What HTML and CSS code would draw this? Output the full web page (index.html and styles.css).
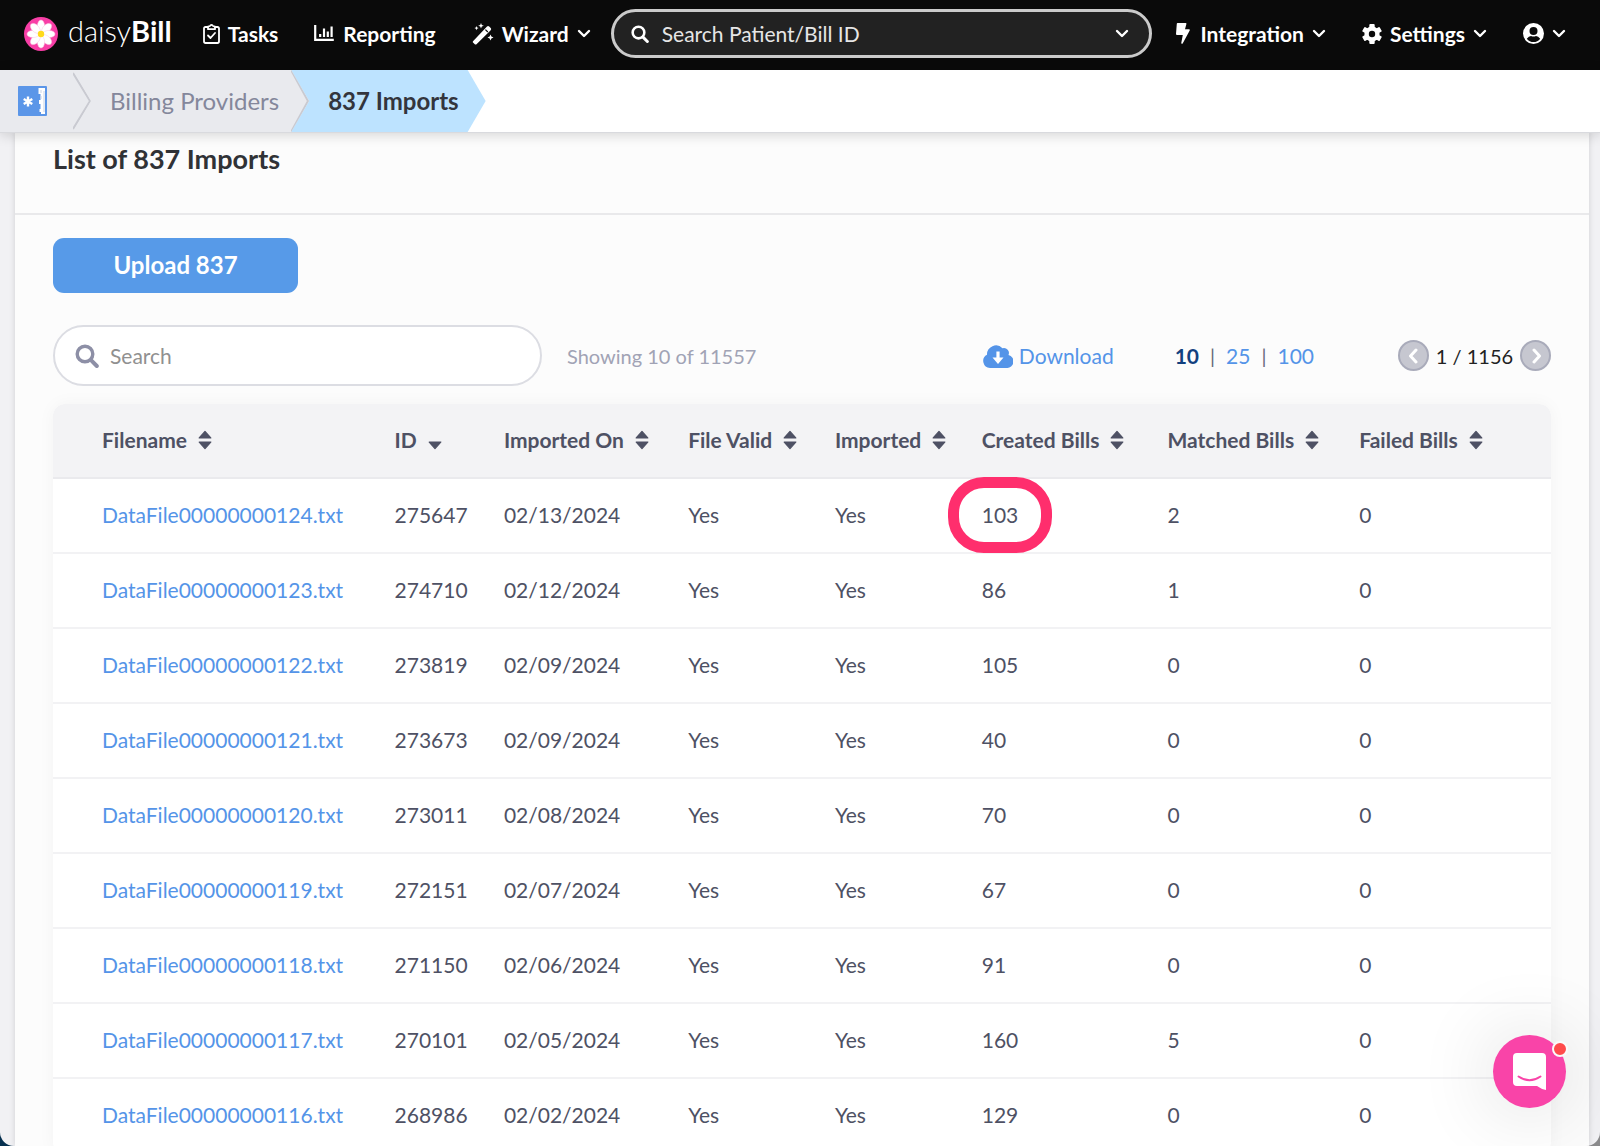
FILE: index.html
```html
<!DOCTYPE html>
<html lang="en">
<head>
    <meta charset="UTF-8">
    <meta name="viewport" content="width=device-width, initial-scale=1.0">
    <title>837 Imports - daisyBill</title>
    <link rel="stylesheet" href="styles.css">
</head>
<body>
    <!-- shared icons -->
    <svg class="sprite" aria-hidden="true">
        <symbol id="chevron" viewBox="0 0 14 10"><path d="M2 2l5 5 5-5" fill="none" stroke="currentColor" stroke-width="2.4" stroke-linecap="round" stroke-linejoin="round"/></symbol>
        <symbol id="magnifier" viewBox="0 0 24 24"><circle cx="10" cy="10" r="7.8" fill="none" stroke="currentColor" stroke-width="3.4"/><path d="M16 16.2l5.8 5.8" stroke="currentColor" stroke-width="4" stroke-linecap="round"/></symbol>
        <symbol id="sort" viewBox="0 0 14 20"><path d="M7 1.4l5.8 6.6H1.2zM7 18.6l5.8-6.6H1.2z" fill="currentColor" stroke="currentColor" stroke-width="1.2" stroke-linejoin="round"/></symbol>
        <symbol id="sort-down" viewBox="0 0 14 20"><path d="M7 18.6l5.8-6.6H1.2z" fill="currentColor" stroke="currentColor" stroke-width="1.2" stroke-linejoin="round"/></symbol>
    </svg>

    <div class="window">
        <header class="topbar">
            <a class="logo" href="#">
                <svg width="34" height="34" viewBox="0 0 34 34" aria-hidden="true">
                    <circle cx="17" cy="17" r="17" fill="#f83ea6"/>
                    <g fill="#fff" stroke="#f9c6e0" stroke-width=".5">
                        <ellipse cx="17" cy="9" rx="3.6" ry="6"/>
                        <ellipse cx="17" cy="9" rx="3.6" ry="6" transform="rotate(45 17 17)"/>
                        <ellipse cx="17" cy="9" rx="3.6" ry="6" transform="rotate(90 17 17)"/>
                        <ellipse cx="17" cy="9" rx="3.6" ry="6" transform="rotate(135 17 17)"/>
                        <ellipse cx="17" cy="9" rx="3.6" ry="6" transform="rotate(180 17 17)"/>
                        <ellipse cx="17" cy="9" rx="3.6" ry="6" transform="rotate(225 17 17)"/>
                        <ellipse cx="17" cy="9" rx="3.6" ry="6" transform="rotate(270 17 17)"/>
                        <ellipse cx="17" cy="9" rx="3.6" ry="6" transform="rotate(315 17 17)"/>
                    </g>
                    <circle cx="17" cy="17" r="3.2" fill="#ffd91a"/>
                </svg>
                <span>daisy<b>Bill</b></span>
            </a>

            <nav class="menu">
                <a href="#">
                    <svg width="17" height="21" viewBox="0 0 17 21" aria-hidden="true"><g fill="none" stroke="currentColor" stroke-width="1.8" stroke-linejoin="round" stroke-linecap="round"><path d="M5 4H2.500Q1 4 1 5.500v12.800Q1 20 2.500 20h12q1.500 0 1.500-1.700V5.500Q16 4 14.500 4H12"/><path d="M5 6.200V3.700l2-.7a1.600 1.600 0 0 1 3 0l2 .7v2.500z"/><path d="M5 12.500l2.500 2.500 4.500-5"/></g></svg>
                    Tasks
                </a>
                <a href="#">
                    <svg width="21" height="19" viewBox="0 0 21 19" aria-hidden="true"><path d="M1.200 1v14.800h18.600M6.200 13v-3M10 13V4.500M13.800 13V7.500M17.600 13V2.500" fill="none" stroke="currentColor" stroke-width="2.2"/></svg>
                    Reporting
                </a>
                <button type="button">
                    <svg width="22" height="22" viewBox="0 0 22 22" aria-hidden="true"><path d="M1 18.200L15 3.600q1-1 2.200-.1l1.500 1.500q1 1 0 2.200L4.500 21.200q-.8.8-1.700 0l-1.800-1.700q-.6-.6 0-1.300z" fill="currentColor"/><path d="M13.400 6.600l2.400 2.400" stroke="#0a0a0a" stroke-width="1.2"/><path d="M9 0l.8 2 2 .8-2 .8L9 5.600l-.8-2-2-.8 2-.8zM4.500 3l.6 1.500 1.500.6-1.500.6-.6 1.500-.6-1.500-1.500-.6 1.500-.6zM18.500 11.500l.9 2.100 2.100.9-2.100.9-.9 2.100-.9-2.100-2.100-.9 2.100-.9z" fill="currentColor"/></svg>
                    Wizard
                    <svg class="chevron" aria-hidden="true"><use href="#chevron"/></svg>
                </button>
            </nav>

            <form class="patient-search" role="search">
                <svg width="18" height="18" aria-hidden="true"><use href="#magnifier"/></svg>
                <input type="text" placeholder="Search Patient/Bill ID" aria-label="Search Patient/Bill ID">
                <button type="button" aria-label="Search options"><svg class="chevron" aria-hidden="true"><use href="#chevron"/></svg></button>
            </form>

            <nav class="menu">
                <button type="button">
                    <svg class="bolt" width="14" height="21" viewBox="0 0 14 21" aria-hidden="true"><path d="M1.500 0h8.200q.9 0 .7.9L9 6.200h4q1.200 0 .7 1.200L6.800 20.300q-.5.8-1.200.4-.5-.3-.3-1L6.800 12H1Q0 12 0 11L.8.700Q.9 0 1.500 0z" fill="currentColor"/></svg>
                    Integration
                    <svg class="chevron" aria-hidden="true"><use href="#chevron"/></svg>
                </button>
                <button type="button">
                    <svg width="20" height="20" viewBox="0 0 20 20" aria-hidden="true"><g fill="currentColor"><rect x="7.300" y="0" width="5.400" height="20" rx="1"/><rect x="7.300" y="0" width="5.400" height="20" rx="1" transform="rotate(60 10 10)"/><rect x="7.300" y="0" width="5.400" height="20" rx="1" transform="rotate(120 10 10)"/><circle cx="10" cy="10" r="7.6"/></g><circle cx="10" cy="10" r="3.2" fill="#0a0a0a"/></svg>
                    Settings
                    <svg class="chevron" aria-hidden="true"><use href="#chevron"/></svg>
                </button>
                <button type="button" aria-label="Account">
                    <svg width="21" height="21" viewBox="0 0 21 21" aria-hidden="true"><circle cx="10.500" cy="10.500" r="10.500" fill="currentColor"/><circle cx="10.500" cy="8" r="4" fill="#0a0a0a"/><path d="M3.800 15.800Q5.800 13 8 13q2.500 1 5 0 2.200 0 4.200 2.800a8.500 8.500 0 0 1-13.400 0z" fill="#0a0a0a"/></svg>
                    <svg class="chevron" aria-hidden="true"><use href="#chevron"/></svg>
                </button>
            </nav>
        </header>

        <nav class="breadcrumbs" aria-label="Breadcrumb">
            <ol>
                <li class="home">
                    <a href="#" aria-label="Home">
                        <svg width="30" height="30" viewBox="0 0 30 30" aria-hidden="true"><rect width="29" height="30" rx="1" fill="#5b96e8"/><path d="M20.500 2h6.500v26h-4v-2h-1.500v-3h1v-5h-1.500v-4h1.500V8h-2z" fill="#fff"/><path d="M26 5v21M23 4v3M23 10v3" stroke="#c9d3e3" stroke-width="1"/><path d="M10 10.500v10M5.700 13l8.600 5M14.300 13l-8.600 5" stroke="#fff" stroke-width="2.4"/></svg>
                    </a>
                    <svg class="arrow" viewBox="0 0 18 62" preserveAspectRatio="none" aria-hidden="true"><path d="M0 3l17 28L0 59"/></svg>
                </li>
                <li>
                    <a href="#">Billing Providers</a>
                    <svg class="arrow" viewBox="0 0 18 62" preserveAspectRatio="none" aria-hidden="true"><path d="M0 0l17 31L0 62"/></svg>
                </li>
                <li class="current" aria-current="page">837 Imports</li>
            </ol>
        </nav>

        <main class="panel">
            <h1>List of 837 Imports</h1>

            <div class="content">
                <button class="upload" type="button">Upload 837</button>

                <div class="toolbar">
                    <div class="search">
                        <svg width="24" height="24" aria-hidden="true"><use href="#magnifier"/></svg>
                        <input type="text" placeholder="Search" aria-label="Search">
                    </div>
                    <span class="showing">Showing 10 of 11557</span>
                    <a class="download" href="#">
                        <svg width="30" height="24" viewBox="0 0 30 24" aria-hidden="true"><path d="M7 24a7 7 0 0 1-3-13.200A9 9 0 0 1 19.500 4.200 5 5 0 0 1 25.500 11 6.600 6.600 0 0 1 23.500 24z" fill="currentColor"/><path d="M15 7.500v8" stroke="#fff" stroke-width="3.2"/><path d="M9.500 13.500h11L15 20z" fill="#fff"/></svg>
                        Download
                    </a>
                    <div class="sizes">
                        <b>10</b><i>|</i><a href="#">25</a><i>|</i><a href="#">100</a>
                    </div>
                    <div class="pager">
                        <button type="button" aria-label="Previous page"><svg width="12" height="16" viewBox="0 0 12 16" aria-hidden="true"><path d="M8 2L2.500 8 8 14"/></svg></button>
                        <span>1 / 1156</span>
                        <button type="button" aria-label="Next page"><svg width="12" height="16" viewBox="0 0 12 16" aria-hidden="true"><path d="M4 2l5.500 6L4 14"/></svg></button>
                    </div>
                </div>

                <table class="imports">
                    <colgroup>
                        <col class="col-file"><col class="col-id"><col class="col-date"><col class="col-flag"><col class="col-flag"><col class="col-created"><col class="col-count"><col class="col-count">
                    </colgroup>
                    <thead>
                        <tr>
                            <th><button type="button">Filename <svg aria-hidden="true"><use href="#sort"/></svg></button></th>
                            <th aria-sort="descending"><button type="button">ID <svg aria-hidden="true"><use href="#sort-down"/></svg></button></th>
                            <th><button type="button">Imported On <svg aria-hidden="true"><use href="#sort"/></svg></button></th>
                            <th><button type="button">File Valid <svg aria-hidden="true"><use href="#sort"/></svg></button></th>
                            <th><button type="button">Imported <svg aria-hidden="true"><use href="#sort"/></svg></button></th>
                            <th><button type="button">Created Bills <svg aria-hidden="true"><use href="#sort"/></svg></button></th>
                            <th><button type="button">Matched Bills <svg aria-hidden="true"><use href="#sort"/></svg></button></th>
                            <th><button type="button">Failed Bills <svg aria-hidden="true"><use href="#sort"/></svg></button></th>
                        </tr>
                    </thead>
                    <tbody>
                        <tr><td><a href="#">DataFile00000000124.txt</a></td><td>275647</td><td>02/13/2024</td><td>Yes</td><td>Yes</td><td><span class="marked">103</span></td><td>2</td><td>0</td></tr>
                        <tr><td><a href="#">DataFile00000000123.txt</a></td><td>274710</td><td>02/12/2024</td><td>Yes</td><td>Yes</td><td>86</td><td>1</td><td>0</td></tr>
                        <tr><td><a href="#">DataFile00000000122.txt</a></td><td>273819</td><td>02/09/2024</td><td>Yes</td><td>Yes</td><td>105</td><td>0</td><td>0</td></tr>
                        <tr><td><a href="#">DataFile00000000121.txt</a></td><td>273673</td><td>02/09/2024</td><td>Yes</td><td>Yes</td><td>40</td><td>0</td><td>0</td></tr>
                        <tr><td><a href="#">DataFile00000000120.txt</a></td><td>273011</td><td>02/08/2024</td><td>Yes</td><td>Yes</td><td>70</td><td>0</td><td>0</td></tr>
                        <tr><td><a href="#">DataFile00000000119.txt</a></td><td>272151</td><td>02/07/2024</td><td>Yes</td><td>Yes</td><td>67</td><td>0</td><td>0</td></tr>
                        <tr><td><a href="#">DataFile00000000118.txt</a></td><td>271150</td><td>02/06/2024</td><td>Yes</td><td>Yes</td><td>91</td><td>0</td><td>0</td></tr>
                        <tr><td><a href="#">DataFile00000000117.txt</a></td><td>270101</td><td>02/05/2024</td><td>Yes</td><td>Yes</td><td>160</td><td>5</td><td>0</td></tr>
                        <tr><td><a href="#">DataFile00000000116.txt</a></td><td>268986</td><td>02/02/2024</td><td>Yes</td><td>Yes</td><td>129</td><td>0</td><td>0</td></tr>
                    </tbody>
                </table>
            </div>
        </main>

        <button class="chat" type="button" aria-label="Open chat">
            <svg width="33" height="37" viewBox="0 0 33 37" aria-hidden="true"><path d="M4 0h25q4 0 4 4v33q-5-1-9-4H4q-4 0-4-4V4q0-4 4-4z" fill="#fff"/><path d="M5.500 23.500q11 7.500 22 0" fill="none" stroke="#f944a8" stroke-width="2" stroke-linecap="round"/></svg>
            <span class="dot"></span>
        </button>
    </div>
</body>
</html>
```
FILE: styles.css
```css
*,
*::after {
    box-sizing: border-box;
}

body {
    margin: 0;
    background: linear-gradient(to right, #06304f 50%, #8b8b8d 50%);
    color: #4e5164;
    font-family: Lato, "Open Sans", sans-serif;
    font-size: 21px;
    line-height: 26px;
}

a {
    color: #5494e8;
    text-decoration: none;
}

button,
input {
    padding: 0;
    border: 0;
    background: none;
    color: inherit;
    font: inherit;
}

svg {
    flex: none;
}

.sprite {
    display: none;
}

.window {
    display: flex;
    flex-direction: column;
    height: 100vh;
    overflow: hidden;
    border-radius: 0 0 14px 14px;
    background: #f1f1f4;
}

/* Top bar */
.topbar {
    display: flex;
    flex: none;
    align-items: center;
    height: 70px;
    padding: 0 34px 3px 24px;
    background: #0a0a0a;
    color: #fff;
}

.logo {
    display: flex;
    align-items: center;
    gap: 10px;
    margin-right: 31px;
    color: #fff;
    font-size: 29px;
    font-weight: 300;
}

.logo span {
    padding-bottom: 5px;
}

.logo b {
    font-weight: 700;
}

.menu {
    display: flex;
    gap: 36px;
}

.menu a,
.menu button {
    display: flex;
    align-items: center;
    gap: 8px;
    color: #fff;
    font-weight: 700;
}

.menu .bolt {
    margin-right: 3px;
}

.chevron {
    width: 14px;
    height: 10px;
}

.patient-search {
    display: flex;
    flex: 1;
    align-items: center;
    gap: 13px;
    height: 49px;
    margin: 0 24px 0 20px;
    padding: 0 20px 0 17px;
    border: 3px solid #cbcbcb;
    border-radius: 25px;
    background: #222;
}

.patient-search input {
    flex: 1;
    min-width: 0;
}

.patient-search input::placeholder {
    color: #e6e6e6;
}

.patient-search button {
    display: flex;
}

/* Breadcrumbs */
.breadcrumbs {
    position: relative;
    flex: none;
    border-bottom: 1px solid #d9dade;
    background: #fff;
    box-shadow: 0 2px 12px rgba(0, 0, 0, 0.16);
}

.breadcrumbs ol {
    display: flex;
    height: 62px;
    margin: 0;
    padding: 0;
    list-style: none;
    font-size: 24px;
}

.breadcrumbs li {
    display: flex;
    align-items: center;
    gap: 12px;
    padding-left: 37px;
    background: #e9eaee;
    clip-path: polygon(0 0, calc(100% - 18px) 0, 100% 50%, calc(100% - 18px) 100%, 0 100%);
}

.breadcrumbs li + li {
    margin-left: -18px;
}

.breadcrumbs a {
    color: #84879b;
}

.breadcrumbs .home {
    z-index: 2;
    gap: 25px;
    padding-left: 18px;
}

.breadcrumbs .home a {
    display: flex;
}

.breadcrumbs li:nth-child(2) {
    z-index: 1;
}

.breadcrumbs .current {
    padding: 0 27px 0 37px;
    background: #bde3ff;
    color: #33353d;
    font-weight: 700;
}

.arrow {
    width: 18px;
    height: 100%;
    fill: none;
    stroke: #c9cad1;
    stroke-width: 2;
}

/* Panel */
.panel {
    flex: 1;
    min-height: 0;
    margin: 0 11px 0 15px;
    background: #fcfcfc;
    box-shadow: 0 0 6px rgba(0, 0, 0, 0.14);
}

.panel h1 {
    margin: 0;
    padding: 11px 38px 39px;
    border-bottom: 2px solid #e9e9eb;
    color: #303236;
    font-size: 27px;
    line-height: 30px;
}

.content {
    padding: 23px 38px 0;
}

.upload {
    display: block;
    width: 245px;
    height: 55px;
    padding-bottom: 2px;
    border-radius: 11px;
    background: #579ae8;
    color: #fff;
    font-size: 24px;
    font-weight: 700;
}

.toolbar {
    display: flex;
    align-items: center;
    margin: 32px 0 18px;
}

.search {
    display: flex;
    align-items: center;
    gap: 11px;
    width: 489px;
    height: 61px;
    padding: 0 20px;
    border: 2px solid #dcdde3;
    border-radius: 31px;
    background: #fff;
    color: #8d8fa6;
}

.search input {
    flex: 1;
    min-width: 0;
    color: #4e5164;
}

.search input::placeholder {
    color: #909090;
}

.showing {
    margin-left: 25px;
    color: #a1a3b5;
    font-size: 20px;
}

.download {
    display: flex;
    align-items: center;
    gap: 6px;
    margin-left: auto;
}

.sizes {
    display: flex;
    gap: 11px;
    margin-left: 61px;
}

.sizes b {
    color: #12407f;
}

.sizes i {
    color: #66687a;
    font-size: 20px;
    font-style: normal;
}

.pager {
    display: flex;
    align-items: center;
    justify-content: space-between;
    width: 153px;
    margin-left: 84px;
    color: #222;
    font-size: 20px;
}

.pager button {
    display: flex;
    align-items: center;
    justify-content: center;
    width: 31px;
    height: 31px;
    border: 2px solid #a9abba;
    border-radius: 50%;
    background: #c6c7d0;
}

.pager path {
    fill: none;
    stroke: #fff;
    stroke-width: 3;
    stroke-linecap: round;
    stroke-linejoin: round;
}

/* Imports table */
.imports {
    width: 100%;
    table-layout: fixed;
    border-spacing: 0;
    border-radius: 12px;
    background: #fff;
    box-shadow: 0 0 18px rgba(0, 0, 0, 0.04);
}

.col-file {
    width: 22.8%;
}

.col-id {
    width: 7.3%;
}

.col-date {
    width: 12.3%;
}

.col-flag {
    width: 9.8%;
}

.col-created {
    width: 12.4%;
}

.col-count {
    width: 12.8%;
}

.imports th,
.imports td {
    height: 75px;
    padding: 0 0 1px;
    border-bottom: 2px solid #f2f2f4;
    text-align: left;
    white-space: nowrap;
}

.imports th:first-child,
.imports td:first-child {
    padding-left: 49px;
}

.imports th {
    border-bottom-color: #eaeaed;
    background: #f3f3f5;
}

.imports th:first-child {
    border-top-left-radius: 12px;
}

.imports th:last-child {
    border-top-right-radius: 12px;
}

.imports th button {
    display: flex;
    align-items: center;
    gap: 11px;
    font-weight: 700;
}

.imports th svg {
    width: 14px;
    height: 20px;
}

.marked {
    position: relative;
}

/* pink ring drawn round the value */
.marked::after {
    content: "";
    position: absolute;
    top: 50%;
    left: 50%;
    width: 104px;
    height: 76px;
    border: 11px solid #ff2e6d;
    border-radius: 36px;
    transform: translate(-50%, -50%);
}

/* Chat launcher */
.chat {
    position: fixed;
    right: 34px;
    bottom: 38px;
    display: flex;
    align-items: center;
    justify-content: center;
    width: 73px;
    height: 73px;
    border-radius: 50%;
    background: #f944a8;
    box-shadow: 0 2px 80px rgba(0, 0, 0, 0.16);
}

.dot {
    position: absolute;
    top: 6px;
    right: -2px;
    width: 16px;
    height: 16px;
    border: 2px solid #fafafa;
    border-radius: 50%;
    background: #ff4b4b;
}
```
